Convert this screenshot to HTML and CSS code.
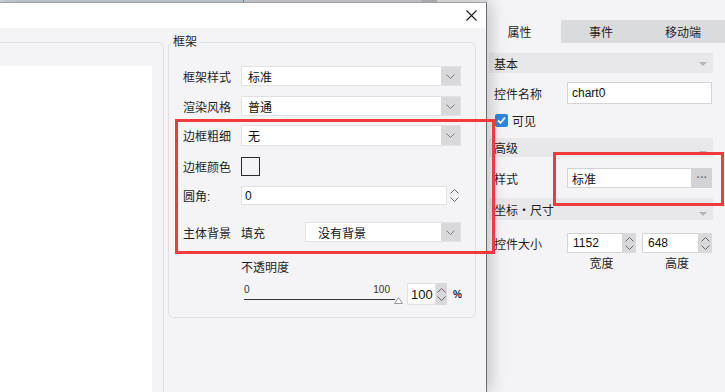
FILE: index.html
```html
<!DOCTYPE html>
<html lang="zh">
<head>
    <meta charset="UTF-8">
    <meta name="viewport" content="width=device-width, initial-scale=1.0">
    <title>框架设置</title>
    <link rel="stylesheet" href="styles.css">
</head>
<body>
    <div class="app">
        <div class="workspace"><div class="ruler"></div></div>

        <div class="props">
            <div class="tabs">
                <div class="tab active">属性</div>
                <div class="tab">事件</div>
                <div class="tab wide">移动端</div>
            </div>
            <div class="props-body">
                <div class="sec-head">基本<span class="caret"></span></div>
                <div class="prop-row name-row">
                    <span class="prop-label">控件名称</span>
                    <div class="field name-field">chart0</div>
                </div>
                <div class="check-row">
                    <span class="checkbox">
                        <svg width="13" height="13" viewBox="0 0 13 13"><polyline points="3,6.5 5.5,9 10,3.5" fill="none" stroke="#fff" stroke-width="1.8"/></svg>
                    </span>
                    可见
                </div>
                <div class="sec-head adv-head">高级<span class="caret low"></span></div>
                <div class="prop-row">
                    <span class="prop-label">样式</span>
                    <div class="field style-field">标准</div>
                    <span class="more-btn">···</span>
                </div>
                <div class="sec-head pos-head">坐标・尺寸<span class="caret low"></span></div>
                <div class="prop-row size-row">
                    <span class="prop-label">控件大小</span>
                    <div class="num-group">
                        <div class="field num-field">1152</div>
                        <div class="spin gray">
                            <svg width="9" height="5" viewBox="0 0 9 5"><polyline points="0.5,4.5 4.5,0.5 8.5,4.5" fill="none" stroke="#666"/></svg>
                            <svg width="9" height="5" viewBox="0 0 9 5"><polyline points="0.5,0.5 4.5,4.5 8.5,0.5" fill="none" stroke="#666"/></svg>
                        </div>
                    </div>
                    <div class="num-group second">
                        <div class="field num-field">648</div>
                        <div class="spin gray">
                            <svg width="9" height="5" viewBox="0 0 9 5"><polyline points="0.5,4.5 4.5,0.5 8.5,4.5" fill="none" stroke="#666"/></svg>
                            <svg width="9" height="5" viewBox="0 0 9 5"><polyline points="0.5,0.5 4.5,4.5 8.5,0.5" fill="none" stroke="#666"/></svg>
                        </div>
                    </div>
                </div>
                <div class="caption-row">
                    <span>宽度</span>
                    <span class="second">高度</span>
                </div>
            </div>
        </div>
    </div>

    <div class="dialog">
        <div class="dialog-head">
            <svg class="close" width="11" height="11" viewBox="0 0 11 11">
                <path d="M0.5 0.5 L10.5 10.5 M10.5 0.5 L0.5 10.5" stroke="#1a1a1a" stroke-width="1.1"/>
            </svg>
        </div>
        <div class="dialog-body">
            <div class="preview"><div class="preview-canvas"></div></div>

            <div class="group">
                <div class="group-title">框架</div>

                <div class="row r1">
                    <span class="row-label">框架样式</span>
                    <div class="select">
                        <span class="select-value">标准</span>
                        <span class="select-arrow"><svg width="9" height="5" viewBox="0 0 9 5"><polyline points="0.5,0.5 4.5,4.5 8.5,0.5" fill="none" stroke="#7a7a7a"/></svg></span>
                    </div>
                </div>

                <div class="row r2">
                    <span class="row-label">渲染风格</span>
                    <div class="select">
                        <span class="select-value">普通</span>
                        <span class="select-arrow"><svg width="9" height="5" viewBox="0 0 9 5"><polyline points="0.5,0.5 4.5,4.5 8.5,0.5" fill="none" stroke="#7a7a7a"/></svg></span>
                    </div>
                </div>

                <div class="row r3">
                    <span class="row-label">边框粗细</span>
                    <div class="select">
                        <span class="select-value">无</span>
                        <span class="select-arrow"><svg width="9" height="5" viewBox="0 0 9 5"><polyline points="0.5,0.5 4.5,4.5 8.5,0.5" fill="none" stroke="#7a7a7a"/></svg></span>
                    </div>
                </div>

                <div class="row r4">
                    <span class="row-label">边框颜色</span>
                    <span class="swatch"></span>
                </div>

                <div class="row r5">
                    <span class="row-label">圆角:</span>
                    <div class="field radius-field">0</div>
                    <div class="spin">
                        <svg width="9" height="5" viewBox="0 0 9 5"><polyline points="0.5,4.5 4.5,0.5 8.5,4.5" fill="none" stroke="#666"/></svg>
                        <svg width="9" height="5" viewBox="0 0 9 5"><polyline points="0.5,0.5 4.5,4.5 8.5,0.5" fill="none" stroke="#666"/></svg>
                    </div>
                </div>

                <div class="row r6">
                    <span class="row-label">主体背景</span>
                    <span class="fill-label">填充</span>
                    <div class="select bg-select">
                        <span class="select-value">没有背景</span>
                        <span class="select-arrow"><svg width="9" height="5" viewBox="0 0 9 5"><polyline points="0.5,0.5 4.5,4.5 8.5,0.5" fill="none" stroke="#7a7a7a"/></svg></span>
                    </div>
                </div>

                <div class="row r7">不透明度</div>

                <div class="row r8">
                    <div class="slider">
                        <div class="ticks"><span>0</span><span>100</span></div>
                        <svg width="160" height="8" viewBox="0 0 160 8">
                            <line x1="0" y1="3.5" x2="151" y2="3.5" stroke="#333"/>
                            <polygon points="150.5,7.5 154.5,1.5 158.5,7.5" fill="#fff" stroke="#999"/>
                        </svg>
                    </div>
                    <div class="field pct-field">100</div>
                    <div class="spin gray pct-spin">
                        <svg width="9" height="5" viewBox="0 0 9 5"><polyline points="0.5,4.5 4.5,0.5 8.5,4.5" fill="none" stroke="#666"/></svg>
                        <svg width="9" height="5" viewBox="0 0 9 5"><polyline points="0.5,0.5 4.5,4.5 8.5,0.5" fill="none" stroke="#666"/></svg>
                    </div>
                    <span class="pct">%</span>
                </div>
            </div>
        </div>
    </div>

    <div class="highlight hl-frame"></div>
    <div class="highlight hl-style"></div>
</body>
</html>
```

FILE: styles.css
```css
* {
    box-sizing: border-box;
}
body {
    margin: 0;
    width: 725px;
    height: 392px;
    overflow: hidden;
    position: relative;
    background: #f4f4f6;
    font-family: "Liberation Sans", "Noto Sans CJK SC", sans-serif;
    font-size: 12px;
    color: #1f1f1f;
}
.app {
    display: flex;
    height: 392px;
}
.workspace {
    width: 488px;
}
.ruler {
    height: 2px;
    background: linear-gradient(to right, #cbd3dc 0 243px, #6a9ad6 243px 244px, #cfd3d8 244px 422px, #b9bcc0 422px 437px, #e6e6e8 437px);
}

/* right property panel */
.props {
    width: 237px;
    padding-top: 20px;
}
.tabs {
    display: flex;
    height: 23px;
}
.tab {
    display: flex;
    align-items: center;
    justify-content: center;
    width: 80px;
    background: #dadbde;
}
.tab.active {
    width: 73px;
    padding-right: 10px;
    background: #f4f4f6;
}
.tab.wide {
    width: 84px;
}
.props-body {
    padding: 0 12px 0 1px;
}
.sec-head {
    display: flex;
    align-items: center;
    justify-content: space-between;
    height: 20px;
    margin-top: 10px;
    padding: 0 6px 0 5px;
    background: #e8e8ea;
}
.adv-head {
    height: 19px;
    margin-top: 11px;
}
.pos-head {
    height: 22px;
    margin-top: 10px;
}
.caret {
    width: 0;
    height: 0;
    border-left: 4px solid transparent;
    border-right: 4px solid transparent;
    border-top: 4px solid #b4b4b6;
    margin-top: 2px;
}
.caret.low {
    margin-top: 10px;
}
.prop-row {
    display: flex;
    align-items: center;
    height: 20px;
    margin-top: 11px;
}
.name-row {
    height: 22px;
    margin-top: 9px;
}
.size-row {
    margin-top: 13px;
}
.prop-label {
    width: 78px;
    flex: none;
    padding-left: 5px;
}
.field {
    display: flex;
    align-items: center;
    height: 100%;
    padding-left: 4px;
    background: #fff;
    border: 1px solid #d4d4d6;
    color: #111;
}
.name-field {
    width: 145px;
}
.style-field {
    width: 125px;
}
.more-btn {
    width: 20px;
    height: 100%;
    background: #d3d3d5;
    color: #6f6f6f;
    font-size: 11px;
    font-weight: bold;
    text-align: center;
    line-height: 18px;
}
.check-row {
    display: flex;
    align-items: center;
    gap: 4px;
    height: 13px;
    margin-top: 10px;
    padding-left: 6px;
}
.checkbox {
    width: 13px;
    height: 13px;
    background: #2f86e0;
    border-radius: 2px;
}
.checkbox svg {
    display: block;
}
.num-group {
    display: flex;
    height: 100%;
}
.num-group.second {
    margin-left: 6px;
}
.num-field {
    width: 56px;
    padding-left: 5px;
}
.second .num-field {
    width: 57px;
}
.spin {
    display: flex;
    flex-direction: column;
    justify-content: center;
    align-items: center;
    gap: 3px;
    width: 13px;
    height: 100%;
}
.spin svg {
    display: block;
}
.spin.gray {
    background: #d9d9db;
}
.caption-row {
    display: flex;
    margin-top: 3px;
    padding-left: 78px;
    line-height: 16px;
}
.caption-row span {
    width: 69px;
    text-align: center;
}
.caption-row .second {
    margin-left: 6px;
    width: 70px;
}

/* dialog */
.dialog {
    position: absolute;
    left: 0;
    top: 2px;
    width: 487px;
    height: 390px;
    overflow: hidden;
    background: #f4f4f6;
    border-top: 1px solid #a3a3a3;
    border-right: 1px solid #6e6e6e;
    box-shadow: 3px 0 16px rgba(0, 0, 0, 0.22);
}
.dialog-head {
    display: flex;
    justify-content: flex-end;
    align-items: center;
    height: 25px;
    padding-right: 9px;
    background: #fff;
}
.close {
    display: block;
}
.dialog-body {
    display: flex;
    align-items: flex-start;
}
.preview {
    width: 176px;
    height: 370px;
    margin: 14px 0 0 -12px;
    padding: 23px 11px 0 11px;
    border: 1px solid #e1e1e4;
    border-radius: 6px;
}
.preview-canvas {
    height: 100%;
    background: #fff;
}
.group {
    width: 308px;
    height: 276px;
    margin: 14px 0 0 4px;
    padding: 0 13px 0 14px;
    border: 1px solid #e1e1e4;
    border-radius: 5px;
}
.group-title {
    width: fit-content;
    margin: -9px 0 0 -12px;
    padding: 0 2px;
    line-height: 16px;
    background: #f4f4f6;
}
.row {
    display: flex;
    align-items: center;
    height: 20px;
}
.r1 { margin-top: 16px; }
.r2 { margin-top: 10px; }
.r3 { margin-top: 9px; height: 21px; }
.r4 { margin-top: 11px; height: 19px; }
.r5 { margin-top: 10px; height: 19px; }
.r6 { margin-top: 17px; }
.r7 { margin-top: 16px; height: 16px; padding-left: 58px; }
.r8 { margin-top: 9px; height: 22px; padding-left: 61px; }
.row-label {
    width: 58px;
    flex: none;
}
.select {
    display: flex;
    width: 220px;
    height: 100%;
    background: #fff;
    border: 1px solid #e2e2e4;
}
.select-value {
    flex: 1;
    display: flex;
    align-items: center;
    padding-left: 6px;
    color: #111;
}
.select-arrow {
    display: flex;
    align-items: center;
    justify-content: center;
    width: 19px;
    background: #d9d9db;
}
.fill-label {
    width: 64px;
    flex: none;
}
.bg-select {
    width: 156px;
}
.bg-select .select-value {
    padding-left: 12px;
}
.swatch {
    width: 19px;
    height: 19px;
    border: 1px solid #2a2a2a;
}
.radius-field {
    width: 206px;
    padding-left: 3px;
    border-color: #e2e2e4;
}
.r5 .spin {
    width: 14px;
}
.slider {
    width: 160px;
    display: flex;
    flex-direction: column;
}
.slider svg {
    display: block;
}
.ticks {
    display: flex;
    justify-content: space-between;
    width: 146px;
    height: 12px;
    line-height: 12px;
    font-size: 10px;
    color: #333;
}
.pct-field {
    width: 30px;
    margin-left: 3px;
    padding-left: 3px;
    border-color: #e2e2e4;
    font-size: 13px;
}
.pct-spin {
    width: 12px;
}
.pct {
    margin-left: 6px;
    font-size: 10px;
    font-weight: bold;
    color: #1a1a40;
}

/* annotation boxes */
.highlight {
    position: absolute;
    border: 3px solid #f23a3c;
}
.hl-frame {
    left: 175px;
    top: 119px;
    width: 320px;
    height: 135px;
}
.hl-style {
    left: 553px;
    top: 152px;
    width: 171px;
    height: 54px;
}
```
